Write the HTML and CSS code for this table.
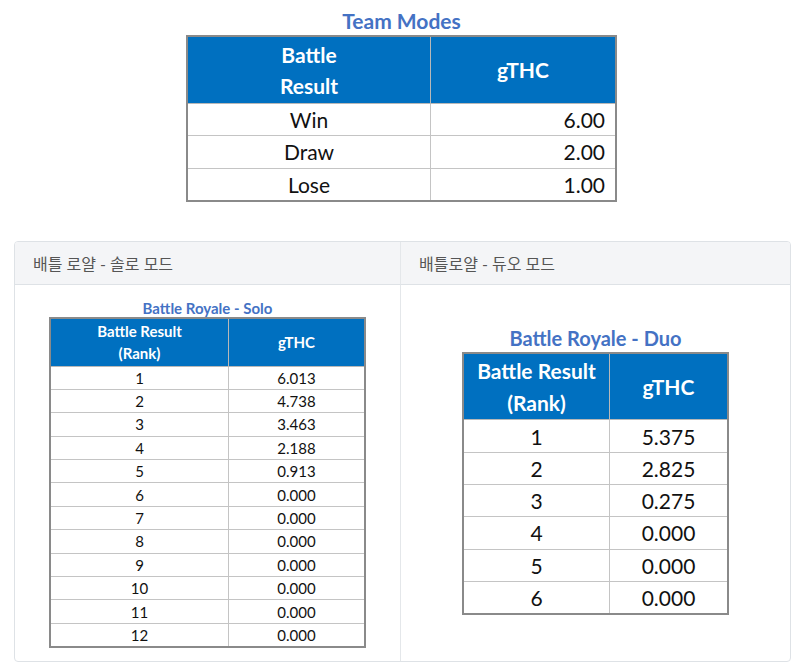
FILE: index.html
```html
<!DOCTYPE html>
<html lang="ko">
<head>
  <meta charset="UTF-8" />
  <meta name="viewport" content="width=device-width,initial-scale=1.0">
  <title>gTHC</title>
  <link rel="stylesheet" href="styles.css">
</head>
<body>
  <div class="team">
    <div class="sheet-title team-title">Team Modes</div>
    <table class="sheet team-table">
      <tr class="head">
        <th class="c1">Battle<br>Result</th>
        <th class="c2">gTHC</th>
      </tr>
      <tr><td class="c1">Win</td><td class="c2 num">6.00</td></tr>
      <tr><td class="c1">Draw</td><td class="c2 num">2.00</td></tr>
      <tr><td class="c1">Lose</td><td class="c2 num">1.00</td></tr>
    </table>
  </div>

  <div class="tabs">
    <div class="tab-head first">배틀 로얄 - 솔로 모드</div>
    <div class="tab-head">배틀로얄 - 듀오 모드</div>

    <div class="tab-body solo first">
      <div class="sheet-title solo-title">Battle Royale - Solo</div>
      <table class="sheet solo-table">
        <tr class="head">
          <th class="c1">Battle Result<br>(Rank)</th>
          <th class="c2">gTHC</th>
        </tr>
        <tr><td>1</td><td>6.013</td></tr>
        <tr><td>2</td><td>4.738</td></tr>
        <tr><td>3</td><td>3.463</td></tr>
        <tr><td>4</td><td>2.188</td></tr>
        <tr><td>5</td><td>0.913</td></tr>
        <tr><td>6</td><td>0.000</td></tr>
        <tr><td>7</td><td>0.000</td></tr>
        <tr><td>8</td><td>0.000</td></tr>
        <tr><td>9</td><td>0.000</td></tr>
        <tr><td>10</td><td>0.000</td></tr>
        <tr><td>11</td><td>0.000</td></tr>
        <tr><td>12</td><td>0.000</td></tr>
      </table>
    </div>

    <div class="tab-body duo">
      <div class="sheet-title duo-title">Battle Royale - Duo</div>
      <table class="sheet duo-table">
        <tr class="head">
          <th class="c1">Battle Result<br>(Rank)</th>
          <th class="c2">gTHC</th>
        </tr>
        <tr><td>1</td><td>5.375</td></tr>
        <tr><td>2</td><td>2.825</td></tr>
        <tr><td>3</td><td>0.275</td></tr>
        <tr><td>4</td><td>0.000</td></tr>
        <tr><td>5</td><td>0.000</td></tr>
        <tr><td>6</td><td>0.000</td></tr>
      </table>
    </div>
  </div>
</body>
</html>
```

FILE: styles.css
```css
html, body {
  margin: 0;
  padding: 0;
  background-color: #fff;
  font-family: Lato, "Noto Sans CJK KR", sans-serif;
  color: #111;
}

.sheet-title {
  text-align: center;
  font-weight: bold;
  color: #4472C4;
}

.sheet {
  border-collapse: collapse;
  border: 2px solid #8a8a8a;
  table-layout: fixed;
}

.sheet th {
  background-color: #0070C0;
  color: #fff;
  font-weight: bold;
  border: 1px solid #b8b8b8;
  padding: 0;
}

.sheet td {
  border: 1px solid #c4c4c4;
  padding: 0;
  text-align: center;
}

/* Team modes */
.team {
  width: 431px;
  margin-left: 186px;
  padding-top: 7px;
}

.team-title {
  font-size: 21px;
  line-height: 28px;
}

.team-table {
  width: 431px;
  font-size: 21px;
}

.team-table .c1 { width: 242px; }

.team-table .head { height: 67px; }

.team-table th {
  line-height: 31px;
}

.team-table td {
  height: 31.5px;
}

.team-table td.num {
  text-align: right;
  padding-right: 10px;
}

/* Tabs panel */
.tabs {
  margin: 39px 0 0 14px;
  width: 775px;
  border: 1px solid #dee2e6;
  border-radius: 4px;
  display: grid;
  grid-template-columns: 386px 1fr;
  overflow: hidden;
}

.tab-head {
  height: 42px;
  display: flex;
  align-items: center;
  padding-left: 18px;
  background-color: #f4f5f7;
  border-bottom: 1px solid #dee2e6;
  font-size: 16px;
  color: #555;
}

.tab-head.first,
.tab-body.first {
  border-right: 1px solid #e4e7ea;
}

.tab-body {
  display: flex;
  flex-direction: column;
  align-items: center;
}

.solo {
  padding: 14px 0 13px;
}

.duo {
  justify-content: center;
  padding-bottom: 6px;
}

.solo-title {
  font-size: 15px;
  line-height: 18px;
}

.solo-table {
  width: 317px;
  font-size: 15px;
}

.solo-table .c1 { width: 177px; }

.solo-table .head { height: 48px; }

.solo-table th {
  line-height: 22px;
}

.solo-table td {
  height: 22.4px;
}

.duo-title {
  font-size: 20px;
  line-height: 27px;
  padding-bottom: 0;
}

.duo-table {
  width: 267px;
  font-size: 21px;
}

.duo-table .c1 { width: 145px; }

.duo-table .head { height: 67px; }

.duo-table th {
  line-height: 32px;
}

.duo-table td {
  height: 31.3px;
}
```
